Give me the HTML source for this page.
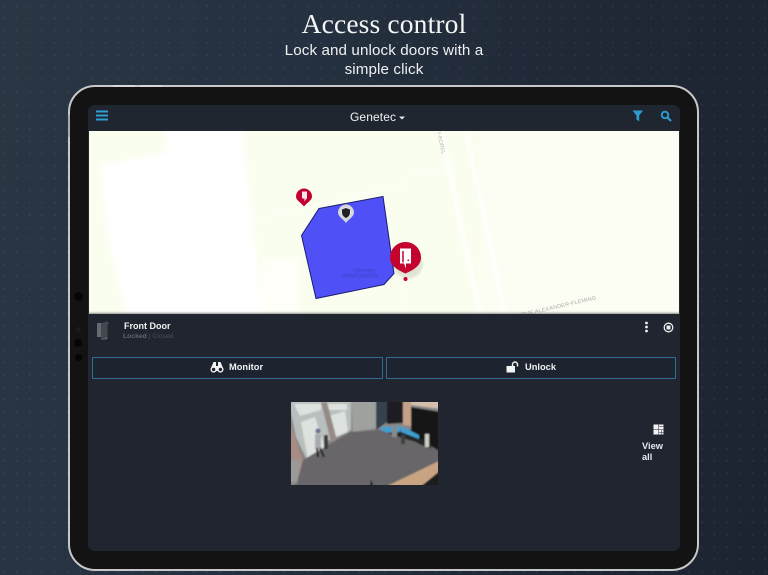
<!DOCTYPE html>
<html><head><meta charset="utf-8">
<style>
html,body{margin:0;padding:0}
body{width:768px;height:575px;overflow:hidden;position:relative;font-family:"Liberation Sans",sans-serif;
background:linear-gradient(100deg,#2a3643 0%,#253140 35%,#1f2835 70%,#1c2431 100%)}
.dots{position:absolute;inset:0;background-image:radial-gradient(circle at 1px 1px,rgba(170,190,205,.11) .7px,transparent 1.1px);background-size:12.7px 12.3px;background-position:3px 5px}
.a{position:absolute}
.wrap{position:absolute;inset:0;filter:blur(.3px)}
h1{position:absolute;left:0;width:768px;top:7px;margin:0;text-align:center;font:400 27.5px/33px "Liberation Serif",serif;color:#f4f5f5;letter-spacing:.15px}
.sub{position:absolute;left:0;width:768px;top:41px;text-align:center;font-size:15.2px;line-height:19px;color:#eef0f1;letter-spacing:.1px}
.tablet{position:absolute;left:68px;top:85px;width:627px;height:482px;border:2px solid #c6c8ca;border-radius:27px;background:#131313}
.screen{position:absolute;left:88px;top:105px;width:592px;height:446px;border-radius:7px;overflow:hidden;background:#20252f}
.hdr{position:absolute;left:0;top:0;width:592px;height:25px;background:#20262f}
.map{position:absolute;left:1px;top:25.500px;width:590px;height:183.500px;background:#fbfeef;overflow:hidden}
.panel{position:absolute;left:0;top:209px;width:592px;height:237px;background:#20252f;box-shadow:0 -1px 2px rgba(90,90,90,.7)}
.btn{position:absolute;height:20px;top:252px;border:1px solid #2f6e90;border-radius:1px;background:#1d2430;box-sizing:content-box}
.lbl{position:absolute;color:#f0f1f2;font-weight:700;font-size:9.300px;line-height:11px}
</style></head><body>
<div class="dots"></div>
<div class="wrap">
<h1>Access control</h1>
<div class="sub">Lock and unlock doors with a<br>simple click</div>

<div class="tablet"></div>
<div class="a" style="left:113px;top:85px;width:22px;height:2px;background:#d6d8da"></div>
<div class="a" style="left:140px;top:85px;width:22px;height:2px;background:#d6d8da"></div>
<div class="a" style="left:68px;top:115px;width:2px;height:22px;background:#a8aaac"></div>
<div class="a" style="left:74px;top:292px;width:9px;height:9px;border-radius:50%;background:#050505"></div>
<div class="a" style="left:76px;top:327px;width:5px;height:5px;border-radius:50%;background:#1c1c1c"></div>
<div class="a" style="left:74px;top:339px;width:8px;height:8px;border-radius:50%;background:#050505"></div>
<div class="a" style="left:75px;top:354px;width:7px;height:7px;border-radius:50%;background:#050505"></div>

<div class="screen">
  <div class="hdr">
    <svg class="a" style="left:8px;top:5px" width="13" height="11" viewBox="0 0 13 11"><path d="M0 1.500H12M0 5.500H12M0 9.500H12" stroke="#2f9fd4" stroke-width="1.900"/></svg>
    <div class="a" style="left:262px;top:5px;font-size:12px;line-height:15px;color:#eef0f1;letter-spacing:.1px">Genetec</div>
    <svg class="a" style="left:311px;top:11px" width="6" height="4" viewBox="0 0 6 4"><path d="M0 .5H6L3 3.500Z" fill="#e8eaeb"/></svg>
    <svg class="a" style="left:544px;top:5px" width="12" height="12" viewBox="0 0 12 12"><path d="M.5 .5H11L7.200 5.500V11.500L4.400 9.500V5.500Z" fill="#2b9bd0"/></svg>
    <svg class="a" style="left:572px;top:5px" width="12" height="12" viewBox="0 0 12 12"><circle cx="5" cy="5" r="3.300" fill="none" stroke="#2b9bd0" stroke-width="1.900"/><path d="M7.400 7.400L11 11" stroke="#2b9bd0" stroke-width="2.200"/></svg>
  </div>
  <div class="map">
    <svg class="a" style="left:0;top:0" width="590" height="184" viewBox="89 130.500 590 184">
      <defs><filter id="b" x="-10%" y="-10%" width="120%" height="120%"><feGaussianBlur stdDeviation="3"/></filter><filter id="c" x="-10%" y="-10%" width="120%" height="120%"><feGaussianBlur stdDeviation="1.200"/></filter></defs>
      <rect x="89" y="130" width="590" height="185" fill="#fafeee"/>
      <g filter="url(#b)">
        <path d="M100 165L165 152V125H242L264 320H128L108 240Z" fill="#fff"/>
        <path d="M262 258H300V320H262Z" fill="#fefff8"/>
        <rect x="480" y="125" width="205" height="195" fill="#fcfef3"/>
      </g>
      <g filter="url(#c)" opacity=".6">
        <path d="M256 219L400 184" stroke="#fff" stroke-width="1.800" fill="none"/>
        <path d="M403 190Q404 174 415 172L440 169" stroke="#fff" stroke-width="2.500" fill="none"/>
        <path d="M441 131L480 314" stroke="#fff" stroke-width="7" fill="none"/>
        <path d="M466 131L505 314" stroke="#fff" stroke-width="6" fill="none"/>
        <path d="M403 272V300Q403 310 395 314" stroke="#fff" stroke-width="3" fill="none"/>
      </g>
      <polygon points="319,208 383,196 394,273 384,284 316,298 301.500,235" fill="#5050f7" stroke="#1d1d73" stroke-width="1"/>
      <text x="353" y="272" font-family="Liberation Sans" font-size="6" fill="#4040c8">Genetec -</text>
      <text x="342" y="277" font-family="Liberation Sans" font-size="6" fill="#4040c8">Headquarters</text>
      <path d="M338 212a8 8 0 1 1 16 0c0 4-4.500 6-8 10.500c-3.500-4.500-8-6.500-8-10.500z" fill="#d4d6d8"/>
      <circle cx="346" cy="212" r="5.200" fill="#fff" opacity=".5"/>
      <path d="M342 209L346 207.500L350 209V212C350 215 348 216.500 346 217.500C344 216.500 342 215 342 212Z" fill="#222"/>
      <path d="M296 196a8 8 0 1 1 16 0c0 4-5 6-8 10c-3-4-8-6-8-10z" fill="#c4002f"/>
      <path d="M302 191H307V197.500L304.500 201V198H302Z" fill="#f6e8ea"/>
      <ellipse cx="408" cy="263" rx="15" ry="15" fill="#000" opacity=".1" filter="url(#c)"/>
      <path d="M390 257a15.500 15.500 0 1 1 31 0c0 9-9 13-15.500 16c-6.500-3-15.500-7-15.500-16z" fill="#c4032f"/>
      <circle cx="405.500" cy="278.500" r="2" fill="#c4032f"/>
      <path d="M400 248H411V263H406V268L404 263H400Z" fill="#fff"/>
      <path d="M403 250.500V262" stroke="#c4032f" stroke-width="1.500"/>
      <rect x="407.500" y="259" width="1.500" height="1.500" fill="#c4032f"/>
      <text font-family="Liberation Sans" font-size="5.500" fill="#b9bcb6" transform="translate(437 131) rotate(78)">Y-BOREL</text>
      <text font-family="Liberation Sans" font-size="5.500" fill="#a9aba6" letter-spacing=".2" transform="translate(522 316) rotate(-13)">RUE ALEXANDER-FLEMING</text>
    </svg>
  </div>
  <div class="panel">
    <svg class="a" style="left:8px;top:6px" width="15" height="20" viewBox="0 0 15 20"><path d="M1 3H13L11.500 4.500V19L5 20V17H1Z" fill="#666a70"/><path d="M5 3.500L11.500 1V17L5 20Z" fill="#43474e"/></svg>
    <div class="lbl" style="left:36px;top:5.500px;font-size:9px;line-height:12px">Front Door</div>
    <div class="a" style="left:35px;top:18.500px;font-size:6.800px;line-height:8px;font-weight:700;color:#62676e">Locked <span style="font-weight:400;color:#4a4f57">| Closed</span></div>
    <svg class="a" style="left:556px;top:7px" width="5" height="12" viewBox="0 0 5 12"><circle cx="2.500" cy="2" r="1.400" fill="#f0f0f0"/><circle cx="2.500" cy="6" r="1.400" fill="#f0f0f0"/><circle cx="2.500" cy="10" r="1.400" fill="#f0f0f0"/></svg>
    <svg class="a" style="left:575px;top:8px" width="11" height="11" viewBox="0 0 11 11"><circle cx="5.500" cy="5.500" r="4.300" fill="none" stroke="#ececec" stroke-width="1.300"/><rect x="3.500" y="3.500" width="4" height="4" rx=".7" fill="#ececec"/></svg>
  </div>
  <div class="btn" style="left:4px;width:289px"></div>
  <div class="btn" style="left:298px;width:288px"></div>
  <svg class="a" style="left:122px;top:256px" width="14" height="12" viewBox="0 0 14 12"><path d="M1 7L3.500 1H6V5H8V1H10.500L13 7V10H1Z" fill="#f2f2f2"/><circle cx="3.600" cy="8.500" r="3.100" fill="#f2f2f2"/><circle cx="10.400" cy="8.500" r="3.100" fill="#f2f2f2"/><circle cx="3.600" cy="8.500" r="1.700" fill="#1d2430"/><circle cx="10.400" cy="8.500" r="1.700" fill="#1d2430"/></svg>
  <div class="lbl" style="left:141px;top:256.500px">Monitor</div>
  <svg class="a" style="left:418px;top:256px" width="13" height="12" viewBox="0 0 13 12"><rect x="0.500" y="5" width="8.500" height="6.500" fill="#f4f4f4"/><path d="M6.500 5.500V3.500A2.500 2.500 0 0 1 11.500 3.500V5.500" fill="none" stroke="#f4f4f4" stroke-width="1.400"/></svg>
  <div class="lbl" style="left:437px;top:256.500px">Unlock</div>

  <svg class="a" style="left:203px;top:297px" width="147" height="83" viewBox="0 0 147 83">
    <defs><filter id="v"><feGaussianBlur stdDeviation=".8"/></filter></defs>
    <g filter="url(#v)">
    <rect x="-3" y="-3" width="153" height="89" fill="#676466"/>
    <path d="M-3 -3H150V30L100 26L85 28L30 47L10 80L-3 86Z" fill="#8a8785"/>
    <path d="M-3 -3H60V28L28 43L16 58L5 35Z" fill="#b9bfbe"/>
    <path d="M3 2H30V8L9 14ZM34 2H56V8H34ZM10 20L24 15L36 52L28 50L17 58ZM38 14L54 9L57 30L43 36Z" fill="#dde2df"/>
    <path d="M30 0H36L46 38L40 40Z" fill="#958a86"/>
    <path d="M0 22L12 60L8 72L0 70Z" fill="#a98c84"/>
    <path d="M-3 58H10L6 80H-3Z" fill="#9a9a98"/>
    <path d="M60 -3H85V26L62 30Z" fill="#9fa19e"/>
    <path d="M85 -3H96V20L85 28Z" fill="#34424e"/>
    <path d="M96 -3H112V21L96 22Z" fill="#1a1d20"/>
    <path d="M112 -3H120V24L112 23Z" fill="#c4a088"/>
    <path d="M120 -3H150V7L120 3Z" fill="#d4c0ac"/>
    <path d="M120 5L150 10V50L120 32Z" fill="#121416"/>
    <path d="M90 30L113 29L140 42V50L125 40Z" fill="#232527"/>
    <path d="M90 25L109 24V30L90 31ZM110 24L128 33V37L110 30Z" fill="#3f9fd0"/>
    <path d="M5 86L12 58L59 30L89 28L150 50V58L92 86Z" fill="#686668"/>
    <path d="M92 86L150 58V86Z" fill="#c9a483"/>
    <path d="M128 86L150 68V86Z" fill="#1c1c1c"/>
    <rect x="24" y="32" width="6" height="15" fill="#a8aaae"/>
    <path d="M26 46L27 55M29 46L33 55" stroke="#1d1d22" stroke-width="2"/>
    <circle cx="27" cy="29" r="2.600" fill="#6a6f92"/>
    <rect x="33" y="33" width="4" height="14" fill="#39393c"/>
    <rect x="101" y="24" width="5" height="11" fill="#8a8a88"/>
    <rect x="134" y="32" width="4" height="13" fill="#d0cdc4"/>
    <rect x="110" y="33" width="4" height="9" fill="#404040"/>
    <path d="M79 86L80 77L83 86Z" fill="#1a1a1a"/>
    </g>
  </svg>

  <svg class="a" style="left:565px;top:319px" width="11" height="11" viewBox="0 0 11 11"><rect x="0.500" y="0.500" width="5" height="5" fill="#f2f2f2"/><rect x="6" y="0.500" width="4.500" height="2" fill="#f2f2f2"/><rect x="6" y="3" width="4.500" height="2.500" fill="#f2f2f2"/><rect x="0.500" y="6" width="5" height="4.500" fill="#f2f2f2"/><rect x="6" y="6" width="2" height="2" fill="#f2f2f2"/><rect x="8.500" y="6" width="2" height="2" fill="#f2f2f2"/><rect x="6" y="8.500" width="2" height="2" fill="#f2f2f2"/><rect x="8.500" y="8.500" width="2" height="2" fill="#f2f2f2"/></svg>
  <div class="lbl" style="left:554px;top:335.500px;line-height:11px;color:#e6e8ea">View<br>all</div>
</div>
</div>
</body></html>
